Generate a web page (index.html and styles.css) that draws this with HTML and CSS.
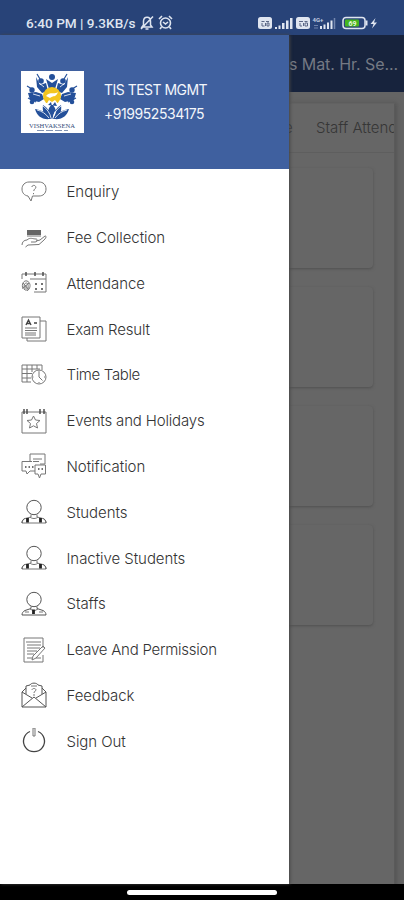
FILE: index.html
```
<!DOCTYPE html>
<html lang="en">
<head>
<meta charset="utf-8">
<title>School Management</title>
<link rel="stylesheet" href="styles.css">
</head>
<body>
<div class="phone">
  <header class="status">
    <span class="clock">6:40 PM | 9.3KB/s</span>
    <svg class="st-bell" width="14" height="16" viewBox="0 0 14 16" fill="none" stroke="currentColor" stroke-width="1.5"><path d="M2 12h10l-1.500-2V6.500C10.500 1 4 1 3.500 6v4zM5.500 14h3M1 14L13 1.500"/></svg>
    <svg class="st-alarm" width="15" height="15" viewBox="0 0 15 15" fill="none" stroke="currentColor" stroke-width="1.600"><circle cx="7.500" cy="8" r="5"/><path d="M1 4l3-3M14 4l-3-3M3.500 12L2 14M11.500 12l1.500 2M5 7l2.500 2L10 7"/></svg>
    <span class="spacer"></span>
    <svg class="st-right" width="122" height="18" viewBox="0 0 122 18">
      <g fill="#dfe5f0"><rect x="0" y="3" width="14" height="12" rx="2.500"/><rect x="38" y="3" width="14" height="12" rx="2.500"/>
      <path d="M17 13h2v2h-2zM20.500 11.500h2V15h-2zM24 9h2.500v6H24zM28 6.500h2.500V15H28zM32 4h2.500v11H32z"/>
      <path d="M62 12h2v3h-2zM65.500 10.500h2V15h-2zM69 8.500h2V15h-2zM72.500 6.500h2V15h-2z"/></g>
      <path d="M76.500 4v11" stroke="#7286ad" stroke-width="1.500"/>
      <g fill="none" stroke="#5a6685" stroke-width="1"><path d="M3.500 7.500h3M8 7.500h3M4 9v3h2.500M7.500 9v3M9 9h2v3H9zM41 7.500h4M46.500 7.500h3M42 9v3h2M45.500 9v3M47 9h2.500v3H47z"/></g>
      <text class="tiny" x="54.500" y="7.500">4G+</text><path d="M56 11.500h4M56 14h4" stroke="#6e82aa"/>
      <rect x="85" y="3.500" width="22" height="11" rx="3" fill="#2a447a" stroke="#dfe5f0" stroke-width="1.500"/><rect x="87" y="5.500" width="14" height="7" rx="1" fill="#45b51f"/><path d="M108.500 6.500v5" stroke="#dfe5f0" stroke-width="2"/>
      <text class="level" x="90.500" y="12">69</text>
      <path d="M117.500 4l-5 6h3l-1.500 4.500 5-6h-3z" fill="#dfe5f0"/>
    </svg>
  </header>

  <main class="screen">
    <section class="page">
      <div class="appbar">s Mat. Hr. Se...</div>
      <div class="panel">
        <div class="tabs"><span class="tab-prev">e</span><span class="tab">Staff Attendance</span></div>
        <div class="cards">
          <div class="card"></div><div class="card"></div><div class="card"></div><div class="card"></div>
        </div>
      </div>
    </section>

    <aside class="drawer">
      <div class="profile">
        <svg class="logo" width="63" height="62" viewBox="0 0 63 62">
          <rect width="63" height="62" fill="#fff"/>
          <g fill="#24509a">
            <circle cx="31" cy="6" r="3"/><circle cx="20" cy="10" r="2.800"/><circle cx="42" cy="10" r="2.800"/><circle cx="11" cy="19" r="2.700"/><circle cx="51" cy="19" r="2.700"/><circle cx="11" cy="31" r="2.300"/><circle cx="51" cy="31" r="2.300"/>
            <path d="M25 8l6 4 6-4-3 10h-6zM15 6l4 8 6-2 2 8-6 2-5-6zM47 6l-4 8-6-2-2 8 6 2 5-6zM7 22l8-1 6 2 2 5-5 3-9-2zM55 22l-8-1-6 2-2 5 5 3 9-2z"/>
            <path d="M31 33c5 5 5 10 0 15-5-5-5-10 0-15zM22 34c5 3 8 8 8 14-7-2-9-8-8-14zM40 34c-5 3-8 8-8 14 7-2 9-8 8-14zM14 38c7 1 12 4 15 10-8 1-13-3-15-10zM48 38c-7 1-12 4-15 10 8 1 13-3 15-10z"/>
          </g>
          <g fill="none" stroke="#24509a" stroke-width="1.200"><path d="M7 27l8 4M55 27l-8 4M16 3l3 5M46 3l-3 5M6 15l5 3M56 15l-5 3"/></g>
          <circle cx="31" cy="25" r="9" fill="#f3c51f"/>
          <path d="M25 25c4-5 8-1 12-4-2 6-5 3-8 6zM25 34l3-5 3 2 3-2 4 5z" fill="#fff"/><path d="M27 34l3-3 1 4 3-4 2 4z" fill="#24509a"/>
          <g fill="none" stroke="#fff" stroke-width=".8"><path d="M22 35c4 3 7 7 8 12M40 35c-4 3-7 7-8 12M16 39c5 1 9 4 12 8M46 39c-5 1-9 4-12 8M18 12l5 4M44 12l-5 4M12 23l7 2M50 23l-7 2"/></g>
          <text class="logo-name" x="8" y="56.500" textLength="46" lengthAdjust="spacingAndGlyphs">VISHVAKSENA</text>
          <path d="M16 59.500h31" stroke="#8294b3" stroke-dasharray="7 2"/>
        </svg>
        <div class="who"><div class="name">TIS TEST MGMT</div><div class="tel">+919952534175</div></div>
      </div>
      <nav class="menu">
        <a class="item"><svg class="icon" viewBox="0 0 26 26"><path d="M8 3h10c4 0 7 2.500 7 7s-3 7-7 7h-6.500L10 22l-3-5c-3.500-.5-6-3-6-7s3-7 7-7z"/><path d="M10.800 8c.5-2.500 4.500-2 4 .8-.3 1.200-2 1.200-2 3.200M12.500 14v1.200"/></svg><span>Enquiry</span></a>
        <a class="item"><svg class="icon" viewBox="0 0 26 26"><path class="solid" d="M6 5h14v5H6z"/><path d="M6 11h14"/><path d="M1 20c0-3 2-5 5-5 3-3 6-1 9-1 2 0 1.500 3-1 3h-4M15 16l4-1 5-4c2 0 1 2-1 4l-5 4.500-11 .5-2.500 2"/></svg><span>Fee Collection</span></a>
        <a class="item"><svg class="icon" viewBox="0 0 26 26"><path d="M1 9V4h24v18H13M9 9h16"/><path class="bold" d="M5 2v4M14 2v4M22 2v4"/><path d="M2 19c-2-5 1-9 4-8s4 5 2 8M3.500 20c-1-5 0-7 2-7s2 4 1 8M5 15v6M2 13l6 7M8 13l-6 5"/><path class="bold" stroke-dasharray="2 4" d="M14 14h10M14 19h8"/></svg><span>Attendance</span></a>
        <a class="item"><svg class="icon" viewBox="0 0 26 26"><path d="M1 1h18v21H1zM19 5h6v20H6v-3"/><path class="bold" d="M5 9l2.500-5L10 9M6 7.500h3M13 7h3"/><path d="M4 12h12M4 14.500h12M4 17h11M4 19h11"/></svg><span class="snug">Exam Result</span></a>
        <a class="item"><svg class="icon" viewBox="0 0 26 26"><path d="M1 3h20v5M1 3v17h9M1 7h18M1 11.500h10M1 16h9M6 3v17M11 3v7M16 3v4"/><circle cx="18" cy="15" r="7"/><path d="M18 9.500V15l3.500 3.500M18 8.500v1M24 15h-1M11.500 15h1M18 21v-1"/></svg><span class="tight">Time Table</span></a>
        <a class="item"><svg class="icon" viewBox="0 0 26 26"><path d="M1 4h24v21H1z"/><path class="bold" d="M3 1v5M6 1v5M19 1v5M23 1v5"/><path d="M12.500 8l2 4 4.500.5-3.500 3 1 4.500-4-2.200-4 2.200 1-4.500-3.500-3 4.500-.5z"/></svg><span class="snug">Events and Holidays</span></a>
        <a class="item"><svg class="icon" viewBox="0 0 26 26"><path d="M9 9V1h15v10h-5M1 8.500h10M1 8.500V18h4l1 3 3-3h5M24.500 12H14v9h3l1.500 4 1.500-4h4.500zM12 6h9M12 8.500h6"/><path class="bold" stroke-dasharray="1.500 2" d="M4 14h9M17 16h6"/></svg><span>Notification</span></a>
        <a class="item"><svg class="icon" viewBox="0 0 26 26"><circle class="dark" cx="13" cy="8.500" r="7.200"/><path d="M10 15.500V18l-6 1.500c-2 1-3 2.500-3 4.500h24c0-2-1-3.500-3-4.500L16 18v-2.500M9 18c2 2 6 2 8 0"/><path class="strong" d="M6.500 19v4.500M19.500 19v4.500"/><path class="dark" d="M1 24c0-2 1-3.500 2.500-4.500M25 24c0-2-1-3.500-2.500-4.500"/></svg><span>Students</span></a>
        <a class="item"><svg class="icon" viewBox="0 0 26 26"><circle class="dark" cx="13" cy="8.500" r="7.200"/><path d="M10 15.500V18l-6 1.500c-2 1-3 2.500-3 4.500h24c0-2-1-3.500-3-4.500L16 18v-2.500M9 18c2 2 6 2 8 0"/><path class="strong" d="M6.500 19v4.500M19.500 19v4.500"/><path class="dark" d="M1 24c0-2 1-3.500 2.500-4.500M25 24c0-2-1-3.500-2.500-4.500"/></svg><span>Inactive Students</span></a>
        <a class="item"><svg class="icon" viewBox="0 0 26 26"><circle class="dark" cx="13" cy="8.500" r="7.200"/><path class="dark" d="M10 15.500v2l-6 2c-2 1-3 2.500-3 4.500h24c0-2-1-3.500-3-4.500l-6-2v-2"/><path d="M9 18l4 2 4-2M4 21h4M18 21h4"/><path class="strong" d="M12.500 18.500v4.500"/></svg><span>Staffs</span></a>
        <a class="item"><svg class="icon" viewBox="0 0 26 26"><path d="M22 11V1H3v24h19v-7M5 5h15M6 8h14M6 11h13M6 14h10M6 17h7M6 21h5M15 21h5"/><path d="M22 9l2 2-9 10-4 2 1-4z"/></svg><span class="close">Leave And Permission</span></a>
        <a class="item"><svg class="icon" viewBox="0 0 26 26"><path class="dark" d="M1 10v15h24V10M1 10l10 6M25 10l-10 6M1 25l12-10 12 10"/><path class="dark" d="M5 12V4l4-1c1-2.500 7-2.500 8 0l4 1v8M1 10l4-4M25 10l-4-4"/><path d="M10 4h6M11 8c0-2 4-2 4 0 0 1-2 1-2 3M13 12v2"/></svg><span>Feedback</span></a>
        <a class="item"><svg class="icon" viewBox="0 0 26 26"><path class="power" d="M9 3.500a10.500 10.500 0 1 0 8 0"/><path d="M12 0h2v8h-2z"/></svg><span>Sign Out</span></a>
      </nav>
    </aside>
  </main>
  <footer class="gesture"><div class="pill"></div></footer>
</div>
</body>
</html>
```
FILE: styles.css
```
* { box-sizing: border-box; }
body { margin: 0; background: #000; font-family: Inter, Roboto, sans-serif; }
.phone { width: 404px; height: 900px; display: flex; flex-direction: column; overflow: hidden; }
.status { height: 35px; flex: none; display: flex; align-items: center; padding: 10px 24px 0 26px; background: #284378; color: #dfe5f0; }
.clock { width: 111px; font: 500 13.600px/16px Roboto, sans-serif; white-space: nowrap; }
.st-bell { margin-left: 3px; }
.st-alarm { margin-left: 4px; }
.spacer { flex: 1; }
.tiny { font: 700 6px Roboto, sans-serif; fill: #c3cde0; }
.level { font: 700 7px Roboto, sans-serif; fill: #e8f5dd; }
.screen { flex: 1; min-height: 0; position: relative; }
.page { height: 100%; padding-left: 289px; background: #646464; overflow: hidden; color: #363636; }
.appbar { height: 57px; background: #17233d; color: #747984; font-size: 16px; letter-spacing: -.07px; line-height: 59px; white-space: nowrap; }
.panel { width: 106px; height: 792px; margin-top: 11px; border-right: 1px solid #5a5a5a; box-shadow: 2px 0 4px #555; background: #666; border-top: 1px solid #626262; }
.tabs { height: 49px; padding-bottom: 1px; border-bottom: 1px solid #5e5e5e; display: flex; align-items: center; overflow: hidden; white-space: nowrap; font-size: 15px; font-weight: 300; }
.tab-prev { width: 28px; margin-left: -6px; padding-left: 1px; flex: none; }
.tab { margin-left: 5px; }
.cards { padding: 15px 21px 0 0; display: flex; flex-direction: column; gap: 19px; }
.card { height: 100px; border-radius: 0 4px 4px 0; background: #666; box-shadow: 0 1px 3px #505050; }
.drawer { position: absolute; left: 0; top: 0; width: 289px; height: 849px; background: #fff; box-shadow: 1px 0 3px #444; }
.profile { height: 133.500px; background: #3f609f; display: flex; padding: 36px 0 0 21px; gap: 20px; color: #f3f6fb; }
.who { padding-top: 9px; white-space: nowrap; }
.name { font-size: 14px; line-height: 20px; letter-spacing: -.52px; }
.tel { font-size: 14px; line-height: 20px; margin-top: 4px; letter-spacing: -.45px; }
.logo-name { font: 400 6px "Liberation Serif", serif; fill: #344b78; }
.menu { display: flex; flex-direction: column; padding-top: .5px; }
.item { height: 45.770px; display: flex; align-items: center; padding-left: 21px; gap: 19.500px; color: #333; font-size: 15px; font-weight: 300; letter-spacing: -.06px; white-space: nowrap; }
.snug { letter-spacing: -.17px; }
.close { letter-spacing: -.25px; }
.tight { letter-spacing: -.35px; }
.icon { width: 26px; height: 26px; flex: none; fill: none; stroke: #777; stroke-width: 1; }
.icon .dark { stroke: #555; }
.icon .bold { stroke: #444; stroke-width: 1.400; }
.icon .strong { stroke: #222; stroke-width: 2.800; }
.icon .power { stroke: #444; stroke-width: 1.300; }
.icon .solid { fill: #666; stroke: none; }
.gesture { height: 16px; flex: none; background: #000; display: flex; justify-content: center; padding-top: 6px; }
.pill { width: 150px; height: 5px; border-radius: 3px; background: #fff; }
```
